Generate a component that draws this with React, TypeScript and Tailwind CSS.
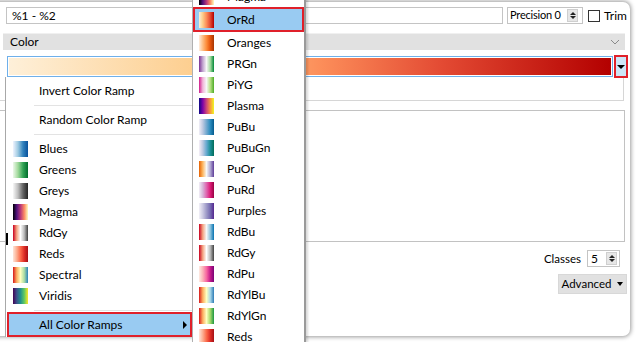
import React from "react";

type Ramp = { name: string; g: string };

const leftRamps: Ramp[] = [
  { name: "Blues", g: "bg-[linear-gradient(to_right,#eff3ff,#9ecae1,#3182bd,#08519c)]" },
  { name: "Greens", g: "bg-[linear-gradient(to_right,#edf8e9,#a1d99b,#31a354,#006d2c)]" },
  { name: "Greys", g: "bg-[linear-gradient(to_right,#f7f7f7,#bdbdbd,#636363,#252525)]" },
  { name: "Magma", g: "bg-[linear-gradient(to_right,#000004,#51127c,#b73779,#fc8961,#fcfdbf)]" },
  { name: "RdGy", g: "bg-[linear-gradient(to_right,#ca0020,#f4a582,#ffffff,#bababa,#404040)]" },
  { name: "Reds", g: "bg-[linear-gradient(to_right,#fee5d9,#fcae91,#fb6a4a,#de2d26,#a50f15)]" },
  { name: "Spectral", g: "bg-[linear-gradient(to_right,#d7191c,#fdae61,#ffffbf,#abdda4,#2b83ba)]" },
  { name: "Viridis", g: "bg-[linear-gradient(to_right,#440154,#3b528b,#21918c,#5ec962,#fde725)]" },
];

const subRamps: Ramp[] = [
  { name: "Magma", g: "bg-[linear-gradient(to_right,#000004,#51127c,#b73779,#fc8961,#fcfdbf)]" },
  { name: "OrRd", g: "bg-[linear-gradient(to_right,#fef0d9,#fdcc8a,#fc8d59,#e34a33,#b30000)]" },
  { name: "Oranges", g: "bg-[linear-gradient(to_right,#feedde,#fdbe85,#fd8d3c,#e6550d,#a63603)]" },
  { name: "PRGn", g: "bg-[linear-gradient(to_right,#7b3294,#c2a5cf,#f7f7f7,#a6dba0,#008837)]" },
  { name: "PiYG", g: "bg-[linear-gradient(to_right,#d01c8b,#f1b6da,#f7f7f7,#b8e186,#4dac26)]" },
  { name: "Plasma", g: "bg-[linear-gradient(to_right,#0d0887,#7e03a8,#cc4778,#f89540,#f0f921)]" },
  { name: "PuBu", g: "bg-[linear-gradient(to_right,#f1eef6,#bdc9e1,#74a9cf,#2b8cbe,#045a8d)]" },
  { name: "PuBuGn", g: "bg-[linear-gradient(to_right,#f6eff7,#bdc9e1,#67a9cf,#1c9099,#016c59)]" },
  { name: "PuOr", g: "bg-[linear-gradient(to_right,#e66101,#fdb863,#f7f7f7,#b2abd2,#5e3c99)]" },
  { name: "PuRd", g: "bg-[linear-gradient(to_right,#f1eef6,#d7b5d8,#df65b0,#dd1c77,#980043)]" },
  { name: "Purples", g: "bg-[linear-gradient(to_right,#f2f0f7,#cbc9e2,#9e9ac8,#756bb1,#54278f)]" },
  { name: "RdBu", g: "bg-[linear-gradient(to_right,#ca0020,#f4a582,#f7f7f7,#92c5de,#0571b0)]" },
  { name: "RdGy", g: "bg-[linear-gradient(to_right,#ca0020,#f4a582,#ffffff,#bababa,#404040)]" },
  { name: "RdPu", g: "bg-[linear-gradient(to_right,#feebe2,#fbb4b9,#f768a1,#c51b8a,#7a0177)]" },
  { name: "RdYlBu", g: "bg-[linear-gradient(to_right,#d7191c,#fdae61,#ffffbf,#abd9e9,#2c7bb6)]" },
  { name: "RdYlGn", g: "bg-[linear-gradient(to_right,#d7191c,#fdae61,#ffffbf,#a6d96a,#1a9641)]" },
  { name: "Reds", g: "bg-[linear-gradient(to_right,#fee5d9,#fcae91,#fb6a4a,#de2d26,#a50f15)]" },
];

function Spinner() {
  return (
    <div className="flex flex-col items-center justify-center w-[11px] h-[13px] shrink-0 bg-[#e6e6e6] border border-[#cfcfcf] gap-[1px]">
      <div className="w-0 h-0 border-l-[3px] border-r-[3px] border-b-[3px] border-l-transparent border-r-transparent border-b-[#222]" />
      <div className="w-0 h-0 border-l-[3px] border-r-[3px] border-t-[3px] border-l-transparent border-r-transparent border-t-[#222]" />
    </div>
  );
}

function Sep() {
  return (
    <div className="h-[8px] flex items-center pl-[28px]">
      <div className="h-px w-full bg-[#e3e3e3]" />
    </div>
  );
}

export default function App() {
  return (
    <div className="relative w-[636px] h-[342px] bg-white overflow-hidden text-[12px] text-black font-['Lato','Noto_Sans',sans-serif]">
      {/* window */}
      <div className="-ml-[4px] mt-[2px] w-[634px] h-[334px] bg-white rounded-r-[7px] shadow-[0_0_4px_1px_rgba(0,0,0,0.4)] flex flex-col">
        {/* row 1 */}
        <div className="mt-[5px] flex items-center h-[17px]">
          <div className="ml-[10px] w-[497px] h-[17px] border border-[#c4c4c4] flex items-center pl-[5px] text-[12px]">%1 - %2</div>
          <div className="ml-[4px] w-[76px] h-[17px] border border-[#c4c4c4] flex items-center justify-between pl-[2px] pr-[4px]">
            <span className="whitespace-nowrap text-[11px] tracking-[-0.2px]">Precision 0</span>
            <Spinner />
          </div>
          <div className="ml-[5px] w-[12px] h-[12px] border border-[#333]" />
          <span className="ml-[4px]">Trim</span>
        </div>
        {/* Color header */}
        <div className="mt-[9px] ml-[7px] w-[622px] h-[17px] bg-[#e1e1e1] border-t border-[#f0f0f0] flex items-center justify-between pl-[7px] pr-[5px]">
          <span>Color</span>
          <svg width="10" height="6" viewBox="0 0 10 6"><path d="M1 1 L5 5 L9 1" fill="none" stroke="#8a8a8a" strokeWidth="1" /></svg>
        </div>
        {/* ramp row */}
        <div className="mt-[5px] flex items-center h-[23px]">
          <div className="ml-[11px] w-[606px] h-[21px] border border-[#6fb0ea] p-[1px] bg-white">
            <div className="w-full h-full bg-[linear-gradient(to_right,#fef0d9,#fdcc8a_33%,#fc8d59_52%,#e34a33_72%,#b30000)]" />
          </div>
          <div className="ml-[1px] w-[14px] h-[23px] border-2 border-[#e0202a] bg-[#cde6f7] flex items-center justify-center">
            <div className="w-0 h-0 border-l-[4px] border-r-[4px] border-t-[4px] border-l-transparent border-r-transparent border-t-black" />
          </div>
        </div>
        {/* preview boxes */}
        <div className="h-[23px] mr-[6px] border-r border-b border-[#d6d6d6]" />
        <div className="mt-[9px] h-[132px] mr-[5px] border border-[#c2c2c2]" />
        <div className="mt-[8px] flex items-center justify-end mr-[10px] h-[17px]">
          <span className="text-[11.5px]">Classes</span>
          <div className="ml-[6px] w-[33px] h-[17px] border border-[#c4c4c4] flex items-center justify-between pl-[3px] pr-[2px]">
            <span>5</span>
            <Spinner />
          </div>
        </div>
        <div className="mt-[7px] flex justify-end mr-[3px]">
          <div className="w-[69px] h-[20px] bg-[#e1e1e1] border border-[#d8d8d8] flex items-center justify-center gap-[6px]">
            <span className="text-[11.5px]">Advanced</span>
            <div className="w-0 h-0 border-l-[3.5px] border-r-[3.5px] border-t-[4px] border-l-transparent border-r-transparent border-t-black" />
          </div>
        </div>
      </div>

      {/* left menu */}
      <div className="absolute left-[5px] top-[77px] w-[192px] h-[260px] bg-white border-l border-[#a8a8a8] pt-[3px]">
        <div className="h-[21px] flex items-center pl-[33px]">Invert Color Ramp</div>
        <Sep />
        <div className="h-[21px] flex items-center pl-[33px]">Random Color Ramp</div>
        <Sep />
        {leftRamps.map((r) => (
          <div key={r.name} className="h-[21px] flex items-center">
            <div className={`ml-[7px] w-[15px] h-[16px] ${r.g}`} />
            <span className="ml-[11px]">{r.name}</span>
          </div>
        ))}
        <Sep />
        <div className="ml-[3px] mr-[7px] h-[21px] flex items-center justify-between bg-[#99cbf2] outline-2 outline-[#e0202a] pl-[30px] pr-[3px]">
          <span>All Color Ramps</span>
          <div className="w-0 h-0 border-t-[4px] border-b-[4px] border-l-[4px] border-t-transparent border-b-transparent border-l-black" />
        </div>
      </div>

      {/* cursor artifact */}
      <div className="absolute left-[6px] top-[233px] w-[2px] h-[12px] bg-black" />

      {/* submenu */}
      <div className="absolute left-[192px] top-[-14px] w-[114px] h-[370px] bg-white border-l border-[#b0b0b0] border-r-2 border-r-[#9a9a9a] shadow-[2px_0_2px_rgba(0,0,0,0.15)]">
        {subRamps.map((r) => (
          <div
            key={r.name}
            className={
              r.name === "OrRd"
                ? "h-[21px] mx-[2px] my-[2px] flex items-center bg-[#99cbf2] outline-2 outline-[#e0202a]"
                : "h-[21px] mx-[2px] flex items-center"
            }
          >
            <div className={`ml-[4px] w-[15px] h-[16px] ${r.g}`} />
            <span className="ml-[13px]">{r.name}</span>
          </div>
        ))}
      </div>
    </div>
  );
}
